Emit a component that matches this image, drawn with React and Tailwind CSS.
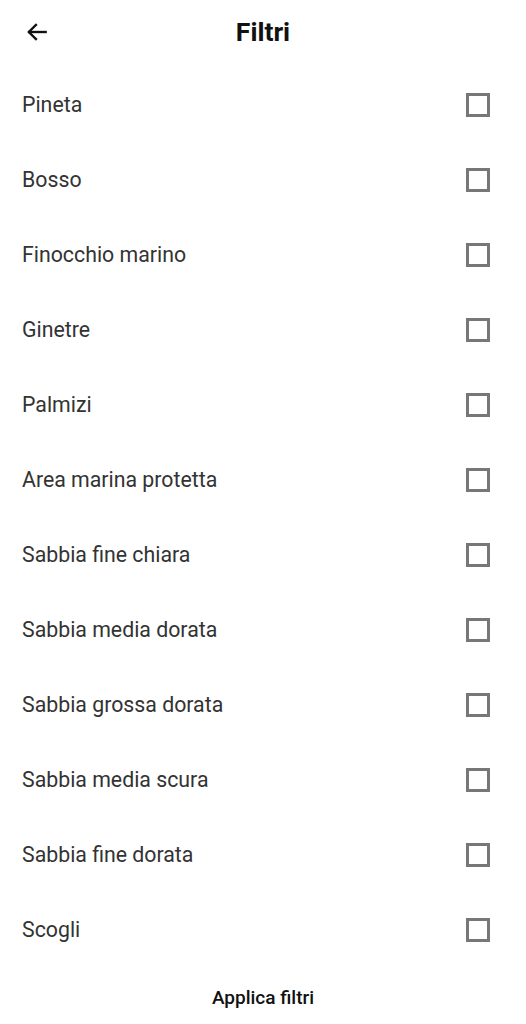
import React from 'react';

const filters = [
  'Pineta',
  'Bosso',
  'Finocchio marino',
  'Ginetre',
  'Palmizi',
  'Area marina protetta',
  'Sabbia fine chiara',
  'Sabbia media dorata',
  'Sabbia grossa dorata',
  'Sabbia media scura',
  'Sabbia fine dorata',
  'Scogli',
];

function BackArrow() {
  return (
    <svg width="26" height="26" viewBox="0 0 24 24" fill="none" stroke="#111" strokeWidth="2.2" strokeLinecap="square">
      <path d="M20 12H5" />
      <path d="M11 5.5L4.5 12L11 18.5" />
    </svg>
  );
}

export default function App() {
  const [checked, setChecked] = React.useState({});

  const toggle = (name) => setChecked((prev) => ({ ...prev, [name]: !prev[name] }));

  return (
    <div className="min-h-screen w-full bg-white font-['Roboto','Liberation_Sans',sans-serif]">
      <header className="relative flex h-[67px] items-center justify-center">
        <button className="absolute left-[24px] top-[19px]" aria-label="Indietro">
          <BackArrow />
        </button>
        <h1 className="pb-[4px] text-[26.5px] font-bold text-[#111]">Filtri</h1>
      </header>

      <ul>
        {filters.map((name) => (
          <li key={name} className="flex h-[75px] items-center justify-between pl-[22px] pr-[36px]" onClick={() => toggle(name)}>
            <span className="text-[21.3px] text-[#333]">{name}</span>
            <span className={`h-[24px] w-[24px] border-[3px] ${checked[name] ? 'border-[#111] bg-[#111]' : 'border-[#777]'}`} />
          </li>
        ))}
      </ul>

      <div className="flex h-[62px] items-center justify-center">
        <button className="text-[19px] font-medium text-[#111]">Applica filtri</button>
      </div>
    </div>
  );
}
